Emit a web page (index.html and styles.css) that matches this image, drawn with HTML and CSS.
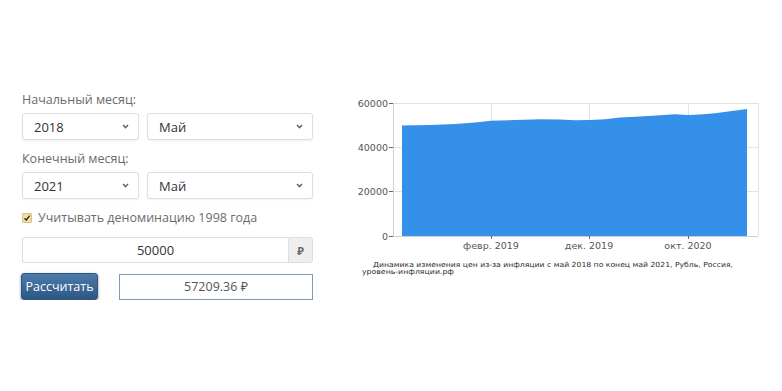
FILE: index.html
```html
<!DOCTYPE html>
<html lang="ru">
<head>
    <meta charset="UTF-8">
    <title>Калькулятор инфляции</title>
    <link rel="stylesheet" href="styles.css">
</head>
<body>
    <div class="page">
        <div class="calc">
            <div class="label">Начальный месяц:</div>
            <div class="row">
                <div class="select year">
                    <span>2018</span>
                    <svg class="chev" width="7" height="5" viewBox="0 0 7 5"><path d="M1 1 L3.5 3.6 L6 1" fill="none" stroke="#666" stroke-width="1.5"/></svg>
                </div>
                <div class="select month">
                    <span>Май</span>
                    <svg class="chev" width="7" height="5" viewBox="0 0 7 5"><path d="M1 1 L3.5 3.6 L6 1" fill="none" stroke="#666" stroke-width="1.5"/></svg>
                </div>
            </div>

            <div class="label">Конечный месяц:</div>
            <div class="row">
                <div class="select year">
                    <span>2021</span>
                    <svg class="chev" width="7" height="5" viewBox="0 0 7 5"><path d="M1 1 L3.5 3.6 L6 1" fill="none" stroke="#666" stroke-width="1.5"/></svg>
                </div>
                <div class="select month">
                    <span>Май</span>
                    <svg class="chev" width="7" height="5" viewBox="0 0 7 5"><path d="M1 1 L3.5 3.6 L6 1" fill="none" stroke="#666" stroke-width="1.5"/></svg>
                </div>
            </div>

            <label class="check">
                <span class="box">
                    <svg width="8" height="8" viewBox="0 0 8 8"><path d="M1.5 4.2 L3.3 6 L6.6 1.6" fill="none" stroke="#333" stroke-width="1.5"/></svg>
                </span>
                Учитывать деноминацию 1998 года
            </label>

            <div class="amount">
                <div class="amount-value">50000</div>
                <div class="addon">₽</div>
            </div>

            <div class="actions">
                <button class="btn">Рассчитать</button>
                <div class="result">57209.36 ₽</div>
            </div>
        </div>

        <svg class="chart" width="420" height="190" viewBox="0 0 420 190">
            <!-- сетка -->
            <g stroke="#e2e2e2" stroke-width="1">
                <line x1="53" y1="8.5" x2="418" y2="8.5"/>
                <line x1="53" y1="52.5" x2="418" y2="52.5"/>
                <line x1="53" y1="96.5" x2="418" y2="96.5"/>
                <line x1="151.5" y1="8" x2="151.5" y2="141"/>
                <line x1="249.5" y1="8" x2="249.5" y2="141"/>
                <line x1="348.5" y1="8" x2="348.5" y2="141"/>
                <line x1="418.5" y1="8" x2="418.5" y2="141"/>
            </g>
            <line x1="53.5" y1="8" x2="53.5" y2="141" stroke="#cfcfcf"/>
            <line x1="53" y1="141.5" x2="418" y2="141.5" stroke="#cfcfcf"/>

            <path d="M62 141 L62 30.5 L90 30 L115 29 L135 27.5 L151 25.8 L175 25 L200 24.3 L220 24.5 L235 25.3 L250 25 L265 24.2 L280 22.5 L300 21.5 L320 20.3 L335 19.3 L348 20 L360 19.6 L375 18.2 L390 16.2 L407 14 L407 141 Z" fill="#3590e9"/>

            <g stroke="#666" stroke-width="1">
                <line x1="49" y1="8.5" x2="53" y2="8.5"/>
                <line x1="49" y1="52.5" x2="53" y2="52.5"/>
                <line x1="49" y1="96.5" x2="53" y2="96.5"/>
                <line x1="49" y1="141.5" x2="53" y2="141.5"/>
                <line x1="151.5" y1="141" x2="151.5" y2="144"/>
                <line x1="249.5" y1="141" x2="249.5" y2="144"/>
                <line x1="348.5" y1="141" x2="348.5" y2="144"/>
            </g>

            <g class="tick" text-anchor="end">
                <text x="48" y="11.5">60000</text>
                <text x="48" y="55.5">40000</text>
                <text x="48" y="99.5">20000</text>
                <text x="48" y="144.5">0</text>
            </g>
            <g class="tick" text-anchor="middle">
                <text x="151" y="154">февр. 2019</text>
                <text x="249" y="154">дек. 2019</text>
                <text x="348" y="154">окт. 2020</text>
            </g>

            <text class="caption" x="33" y="171.5" textLength="360" lengthAdjust="spacingAndGlyphs">Динамика изменения цен из-за инфляции с май 2018 по конец май 2021, Рубль, Россия,</text>
            <text class="caption" x="22" y="178.5" textLength="92" lengthAdjust="spacingAndGlyphs">уровень-инфляции.рф</text>
        </svg>
    </div>
</body>
</html>
```

FILE: styles.css
```css
body {
    margin: 0;
    background: #ffffff;
    font-family: "Open Sans", "Noto Sans", sans-serif;
    color: #333333;
}
.page {
    display: flex;
    align-items: flex-start;
    padding: 91px 0 0 22px;
}
.calc {
    width: 291px;
    display: flex;
    flex-direction: column;
}
.label {
    font-size: 12.5px;
    line-height: 18px;
    color: #6b6b6b;
    margin-bottom: 4px;
}
.row {
    display: flex;
    gap: 8px;
    margin-bottom: 10px;
}
.select {
    height: 25px;
    display: flex;
    align-items: center;
    justify-content: space-between;
    padding: 0 9px 0 11px;
    border: 1px solid #dedede;
    border-radius: 3px;
    background: #ffffff;
    box-shadow: 0 1px 2px rgba(0, 0, 0, 0.06);
    font-size: 13px;
    color: #333333;
}
.year {
    width: 95px;
}
.month {
    flex: 1;
}
.check {
    display: flex;
    align-items: center;
    gap: 6px;
    font-size: 12.5px;
    line-height: 18px;
    color: #6b6b6b;
    margin: 0 0 10px 0;
}
.check .box {
    width: 8px;
    height: 8px;
    background: #f3e2a8;
    border: 1px solid #d8c27d;
    border-radius: 1px;
    display: flex;
    align-items: center;
    justify-content: center;
}
.amount {
    display: flex;
    height: 26px;
    margin-bottom: 10px;
}
.amount-value {
    flex: 1;
    display: flex;
    align-items: center;
    justify-content: center;
    border: 1px solid #dedede;
    border-right: none;
    border-radius: 3px 0 0 3px;
    font-size: 13px;
    color: #333333;
}
.addon {
    width: 23px;
    display: flex;
    align-items: center;
    justify-content: center;
    background: #eeeeee;
    border: 1px solid #dedede;
    border-radius: 0 3px 3px 0;
    font-size: 11px;
    font-weight: bold;
    color: #666666;
}
.actions {
    display: flex;
    align-items: center;
    gap: 21px;
}
.btn {
    width: 77px;
    height: 27px;
    margin-left: -1px;
    padding: 0;
    border: 1px solid #2d5680;
    border-radius: 3px;
    background: linear-gradient(#4c7aab, #2c5784);
    box-shadow: 0 1px 3px rgba(0, 0, 0, 0.45);
    color: #ffffff;
    font-family: "Open Sans", "Noto Sans", sans-serif;
    font-size: 12.5px;
}
.result {
    flex: 1;
    height: 24px;
    display: flex;
    align-items: center;
    justify-content: center;
    border: 1px solid #7d9ab6;
    font-size: 12.5px;
    color: #555555;
}
.chart {
    display: block;
    margin: 4px 0 0 27px;
}
.tick {
    font-family: "DejaVu Sans", sans-serif;
    font-size: 9.5px;
    fill: #555555;
}
.caption {
    font-family: "DejaVu Sans", sans-serif;
    font-size: 7px;
    fill: #2a2a2a;
}
```
